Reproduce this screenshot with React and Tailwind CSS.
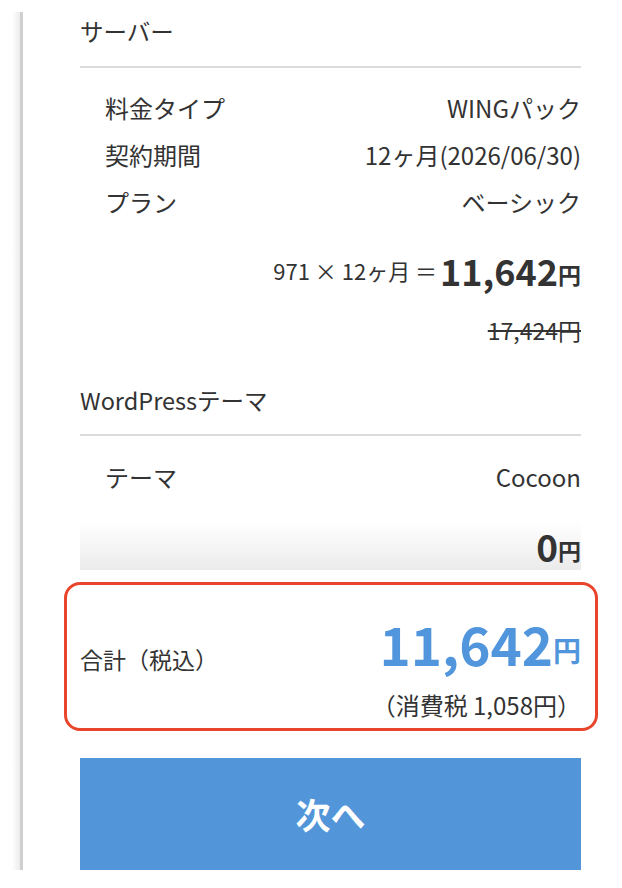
import React from 'react'

const font = { fontFamily: '"Noto Sans CJK JP", "Noto Sans", sans-serif' }

const rows = [
  { label: '料金タイプ', value: 'WINGパック' },
  { label: '契約期間', value: '12ヶ月(2026/06/30)' },
  { label: 'プラン', value: 'ベーシック' },
]

const Row = ({ label, value }) => (
  <div className="flex h-[47px] items-center justify-between pl-[25px] text-[24px]">
    <span>{label}</span>
    <span>{value}</span>
  </div>
)

const App = () => {
  return (
    <div className="h-[888px] overflow-hidden bg-white pt-[12px] text-[#333]" style={font}>
      <div className="flex h-[858px]">
        <div className="ml-[12px] w-[8px] bg-gradient-to-r from-white to-[#ececec]" />
        <div className="flex-1 border-l-[3px] border-[#cfcfcf]">
          <div className="ml-[57px] w-[501px]">
            <div className="flex h-[40px] items-center text-[23.5px]">サーバー</div>
            <div className="mt-[14px] h-[2px] bg-[#dcdcdc]" />

            <div className="pt-[16px]">
              {rows.map((r) => (
                <Row key={r.label} {...r} />
              ))}
            </div>

            <div className="mt-[21px] flex h-[48px] items-center justify-end">
              <span className="text-[22px]">971 × 12ヶ月 ＝</span>
              <span className="ml-[3px] text-[36px] font-bold leading-none">11,642</span>
              <span className="mt-[8px] text-[23px] font-bold">円</span>
            </div>
            <div className="mt-[12px] flex h-[48px] items-center justify-end text-[23px] line-through">
              17,424円
            </div>

            <div className="mt-[27px] flex h-[40px] items-center text-[23.5px]">WordPressテーマ</div>
            <div className="mt-[13px] h-[2px] bg-[#dcdcdc]" />

            <div className="mt-[17px]">
              <Row label="テーマ" value="Cocoon" />
            </div>

            <div className="mt-[22px] flex h-[48px] items-center justify-end bg-gradient-to-b from-white to-[#ebebeb]">
              <span className="text-[37px] font-bold leading-none">0</span>
              <span className="mt-[8px] text-[23px] font-bold">円</span>
            </div>

            <div className="-ml-[16px] -mr-[17px] mt-[12px] flex h-[149px] items-center justify-between rounded-[16px] border-[3px] border-[#e8452c] pl-[13px] pr-[14px]">
              <span className="mt-[5px] text-[23px]">合計（税込）</span>
              <div className="flex flex-col items-end pt-[18px]">
                <div className="flex h-[64px] items-center text-[#5196dc]">
                  <span className="text-[53px] font-bold leading-none">11,642</span>
                  <span className="mt-[14px] text-[28px] font-bold">円</span>
                </div>
                <div className="mt-[15px] flex h-[30px] items-center text-[24px]">（消費税 1,058円）</div>
              </div>
            </div>

            <button className="mt-[27px] flex h-[112px] w-full items-center justify-center bg-[#5296d9] text-[35px] font-bold text-white">
              次へ
            </button>
          </div>
        </div>
      </div>
    </div>
  )
}

export default App
